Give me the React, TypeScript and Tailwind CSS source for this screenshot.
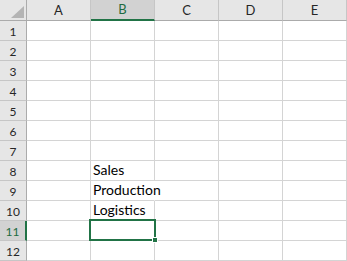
import React from 'react';

const COLS = ['A', 'B', 'C', 'D', 'E'];
const ROWS = [1, 2, 3, 4, 5, 6, 7, 8, 9, 10, 11, 12];

const DATA: Record<string, string> = {
  B8: 'Sales',
  B9: 'Production',
  B10: 'Logistics',
};

const ACTIVE_COL = 'B';
const ACTIVE_ROW = 11;

const App: React.FC = () => {
  return (
    <div
      className="relative w-[347px] h-[261px] bg-white overflow-hidden"
      style={{ fontFamily: 'Lato, "Liberation Sans", sans-serif' }}
    >
      <div className="grid grid-cols-[27px_repeat(5,64px)] grid-rows-[21px_repeat(12,20px)]">
        {/* corner */}
        <div className="relative bg-[#e6e6e6] border-r border-b border-[#ababab]">
          <svg className="absolute left-[11px] top-[6px]" width="13" height="12" viewBox="0 0 13 12">
            <polygon points="13,0 13,12 0,12" fill="#b4b4b4" />
          </svg>
        </div>

        {COLS.map(c => {
          const active = c === ACTIVE_COL;
          return (
            <div
              key={c}
              className={`flex items-center justify-center text-[13px] leading-none border-r border-[#c6c6c6] ${
                active
                  ? 'bg-[#d2d2d2] text-[#1e6b41] border-b-2 border-b-[#217346]'
                  : 'bg-[#e6e6e6] text-[#262626] border-b border-b-[#ababab]'
              }`}
            >
              {c}
            </div>
          );
        })}

        {ROWS.map(r => (
          <React.Fragment key={r}>
            <div
              className={`flex items-center justify-center pt-[2px] text-[12px] leading-none border-b border-[#c6c6c6] ${
                r === ACTIVE_ROW
                  ? 'bg-[#d2d2d2] text-[#1e6b41] border-r-2 border-r-[#217346]'
                  : 'bg-[#e6e6e6] text-[#262626] border-r border-r-[#ababab]'
              }`}
            >
              {r}
            </div>
            {COLS.map(c => {
              const key = `${c}${r}`;
              const text = DATA[key];
              const overflow = key === 'B9';
              return (
                <div
                  key={key}
                  className={`relative flex items-end pl-[2px] pb-[2px] border-b border-[#d4d4d4] whitespace-nowrap text-[14px] leading-[16px] text-black ${
                    overflow ? 'z-10 border-r border-r-transparent' : 'border-r border-r-[#d4d4d4]'
                  }`}
                >
                  {text}
                </div>
              );
            })}
          </React.Fragment>
        ))}
      </div>

      {/* selection B11 */}
      <div className="absolute left-[89px] top-[219px] w-[67px] h-[22px] border-2 border-[#217346] z-20" />
      <div className="absolute left-[152px] top-[237px] w-[6px] h-[6px] bg-[#217346] border border-white z-30" />
    </div>
  );
};

export default App;
